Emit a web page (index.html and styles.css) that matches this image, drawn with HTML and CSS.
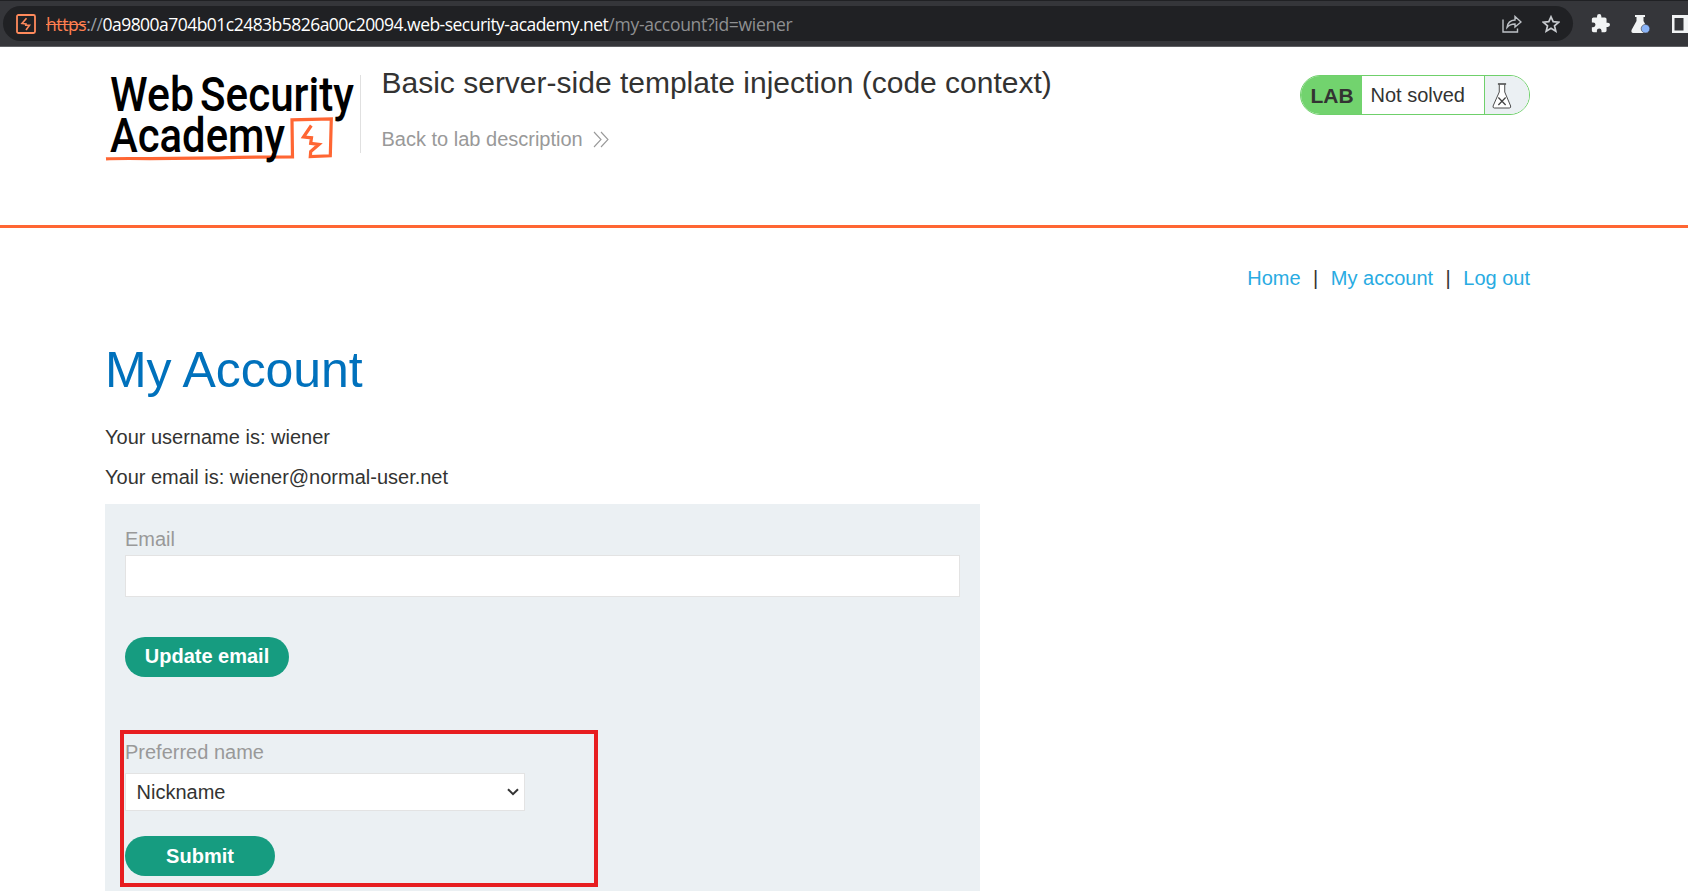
FILE: index.html
```html
<!DOCTYPE html>
<html lang="en">
<head>
<meta charset="utf-8">
<title>My Account</title>
<link rel="stylesheet" href="styles.css">
</head>
<body>
<div class="toolbar">
  <div class="omnibox">
    <svg class="site-icon" width="20" height="20" viewBox="0 0 20 20"><rect x="1" y="1" width="18" height="18" rx="1.5" fill="none" stroke="#ff8a5c" stroke-width="1.8"/><path d="M10.500 4.200L6 9.500L10 10L9.800 11.200H13.500L10 16" fill="none" stroke="#ff8a5c" stroke-width="1.6"/></svg>
    <div class="url"><span class="scheme"><s>https</s>://</span><span class="host">0a9800a704b01c2483b5826a00c20094.web-security-academy.net</span><span class="path">/my-account?id=wiener</span></div>
    <svg class="share" width="20" height="18" viewBox="0 0 20 18" fill="none" stroke="#bdc1c6" stroke-width="1.4"><path d="M1 4.500V17H15.500V13.500"/><path d="M5 12.500C5.500 8 8.500 5.300 13 5V1.500L19 7L13 12V9C9.500 9 7 10 5 12.500Z"/></svg>
    <svg class="star" width="18" height="18" viewBox="0 0 18 18"><path d="M9 1.800L11.200 6.700L16.700 7.200L12.500 10.800L13.800 16.200L9 13.300L4.200 16.200L5.500 10.800L1.300 7.200L6.800 6.700Z" fill="none" stroke="#c8cbcf" stroke-width="1.700"/></svg>
  </div>
  <svg class="puzzle" width="19" height="19" viewBox="1 1 22 22"><path fill="#f1f3f4" d="M20.500 11H19V7c0-1.100-.9-2-2-2h-4V3.500a2.500 2.500 0 0 0-5 0V5H4c-1.100 0-2 .9-2 2v3.800h1.500a2.700 2.700 0 0 1 0 5.400H2V20c0 1.100.9 2 2 2h3.800v-1.500a2.700 2.700 0 0 1 5.400 0V22H17c1.100 0 2-.9 2-2v-4h1.500a2.500 2.500 0 0 0 0-5z"/></svg>
  <svg class="labs" width="20" height="20" viewBox="0 0 20 20"><path fill="#f1f3f4" d="M4 1H14V3H12.500V7L17 15.500Q18 19 15.500 19H2Q-.5 18.500 .8 15.500L5.500 7V3H4Z"/><circle cx="14.500" cy="14.700" r="4.300" fill="#8ab4f8" stroke="#35363a" stroke-width=".6"/></svg>
  <svg class="panel" width="16" height="18" viewBox="0 0 16 18"><path fill="#f1f3f4" fill-rule="evenodd" d="M0 0H16V18H0ZM2.500 3V15.500H11.500V3Z"/></svg>
</div>

<header class="lab-header">
  <svg class="logo" width="256" height="90" viewBox="105 75 256 90">
    <path d="M106 158.900Q114 158.300 150 158.600L220 157.800Q260 156.800 292.500 156.800L292 119.800L331.300 119L330.300 155.800L310.300 156.500L310.700 151.500L319 144.300L310.700 143.300L311.500 137.800L303.500 137L311.300 125.500" fill="none" stroke="#ff6633" stroke-width="3.200"/>
    <g class="logo-text"><text x="110" y="111" textLength="84" lengthAdjust="spacingAndGlyphs">Web</text><text x="200" y="111" textLength="154" lengthAdjust="spacingAndGlyphs">Security</text><text x="110" y="152" textLength="175" lengthAdjust="spacingAndGlyphs">Academy</text></g>
  </svg>
  <div class="title">
    <h2>Basic server-side template injection (code context)</h2>
    <a class="back">Back to lab description<svg width="16" height="17" viewBox="0 0 16 17" fill="none" stroke="#999" stroke-width="1.100"><path d="M1 1L8 8.500L1 16M8 1L15 8.500L8 16"/></svg></a>
  </div>
  <div class="status"><b>LAB</b><span>Not solved</span>
    <i><svg width="20" height="26" viewBox="0 0 22 26" preserveAspectRatio="none" fill="#fff" stroke="#444" stroke-width="1"><path d="M8 1.500V9L1.200 23Q.8 25 2.500 25H19Q21 25 20.500 23L14 9V1.500"/><path d="M6.500 1H15.500M7 14.500L15 22M15 14.500L7 22" stroke-width="1.500"/></svg></i>
  </div>
</header>

<main class="page">
  <nav><a>Home</a><span>|</span><a>My account</a><span>|</span><a>Log out</a></nav>
  <h1>My Account</h1>
  <p>Your username is: wiener</p>
  <p>Your email is: wiener@normal-user.net</p>
  <div class="forms">
    <label>Email</label>
    <div class="input"></div>
    <div class="button update">Update email</div>
    <div class="preferred">
      <label>Preferred name</label>
      <div class="select">Nickname<svg width="12" height="8" viewBox="0 0 12 8"><path d="M1 1.200L6 6.200L11 1.200" fill="none" stroke="#333" stroke-width="2"/></svg></div>
      <div class="button submit">Submit</div>
      <div class="highlight"></div>
    </div>
  </div>
</main>
</body>
</html>
```
FILE: styles.css
```css
* { box-sizing: border-box; }
body { margin: 0; height: 891px; overflow: hidden; background: #fff; color: #333332; font: 20px/23px "Liberation Sans", Arial, sans-serif; }
h1, h2, p { margin: 0; font-weight: 400; }
svg { flex: none; display: block; }
.toolbar { height: 47px; display: flex; align-items: center; background: #35363a; border-top: 1px solid #202124; border-bottom: 1px solid #5f6064; padding: 0 0 0 3px; overflow: hidden; }
.omnibox { width: 1570px; height: 35px; border-radius: 18px; background: #202124; display: flex; align-items: center; padding: 0 13.5px 0 13px; flex: none; }
.url { flex: 1; display: flex; margin-left: 10px; font: 17.5px/24px "Open Sans", "Noto Sans", sans-serif; white-space: nowrap; }
.scheme { color: #9aa0a6; letter-spacing: -.4px; }
.scheme s { color: #ff7f50; }
.host { color: #fff; letter-spacing: -.53px; }
.path { color: #8f9092; letter-spacing: -.28px; }
.star { margin-left: 20px; }
.puzzle { margin-left: 18px; flex: none; }
.labs { margin-left: 21px; }
.panel { margin-left: 21px; }
.lab-header { height: 181px; border-bottom: 3px solid #ff6633; padding: 28px 158px 0 105px; display: flex; align-items: flex-start; }
.logo { overflow: visible; }
.logo-text { font: 500 47.5px Roboto, sans-serif; fill: #000; }
.title { height: 78px; border-left: 1px solid #e0e0e0; padding-left: 20.5px; margin-left: -1px; flex: 1; }
.title h2 { font-size: 30px; line-height: 34px; margin-top: -9px; white-space: nowrap; }
.back { color: #999; display: flex; align-items: center; margin-top: 28px; }
.back svg { margin-left: 10px; }
.status { display: flex; width: 230px; height: 40px; border: 1px solid #6fd06b; border-radius: 20px; overflow: hidden; line-height: 38px; }
.status b { width: 61px; background: #72d36e; padding-left: 9.5px; font-size: 21px; line-height: 39px; }
.status span { width: 122px; padding-left: 8.5px; }
.status i { flex: 1; background: #ebf0f3; border-left: 1px solid #6fd06b; padding: 7px 0 0 7px; }
.page { padding: 39px 158px 0 105px; }
nav { display: flex; justify-content: flex-end; gap: 12.5px; color: #333332; }
nav a { color: #29abe2; }
h1 { color: #0071bc; font-size: 50px; line-height: 58px; margin-top: 51px; letter-spacing: -.1px; }
.page p { line-height: 23px; margin-top: 17px; }
.page h1 + p { margin-top: 27px; }
.forms { width: 875px; height: 388px; background: #ebf0f3; margin-top: 15px; padding: 24px 20px 0; }
label { display: block; color: #999; }
.input { height: 42px; background: #fff; border: 1px solid #e3e3e3; margin-top: 4px; }
.button { height: 40px; border-radius: 20px; background: #169c80; color: #fff; font-weight: 700; text-align: center; line-height: 38px; }
.update { width: 164px; margin-top: 40px; }
.preferred { position: relative; padding-top: 64px; }
.select { width: 400px; height: 38px; background: #fff; border: 1px solid #e3e3e3; margin-top: 9px; padding: 0 5px 0 10.5px; display: flex; align-items: center; justify-content: space-between; }
.submit { width: 150px; margin-top: 25px; line-height: 40px; }
.highlight { position: absolute; left: -5px; top: 53px; width: 478px; height: 157px; border: 4px solid #e71d20; }
```
